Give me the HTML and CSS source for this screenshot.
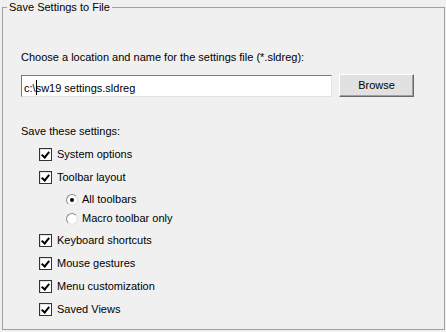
FILE: index.html
```html
<!DOCTYPE html>
<html lang="en">
<head>
    <meta charset="UTF-8">
    <title>Save Settings to File</title>
    <link rel="stylesheet" href="styles.css">
</head>
<body>
    <fieldset class="group">
        <legend>Save Settings to File</legend>
        <div class="group-body">
            <p class="prompt">Choose a location and name for the settings file (*.sldreg):</p>

            <div class="file-row">
                <div class="file-input">c:\<span class="caret"></span>sw19 settings.sldreg</div>
                <button class="btn">Browse</button>
            </div>

            <p class="section-label">Save these settings:</p>

            <div class="options">
                <div class="check-row"><span class="check on"></span>System options</div>
                <div class="check-row"><span class="check on"></span>Toolbar layout</div>

                <div class="radios">
                    <div class="radio-row"><span class="radio on"></span>All toolbars</div>
                    <div class="radio-row"><span class="radio"></span>Macro toolbar only</div>
                </div>

                <div class="check-row"><span class="check on"></span>Keyboard shortcuts</div>
                <div class="check-row"><span class="check on"></span>Mouse gestures</div>
                <div class="check-row"><span class="check on"></span>Menu customization</div>
                <div class="check-row"><span class="check on"></span>Saved Views</div>
            </div>
        </div>
    </fieldset>
</body>
</html>
```

FILE: styles.css
```css
* {
    box-sizing: border-box;
}
body {
    margin: 0;
    background-color: #f0f0f0;
    font-family: "Liberation Sans", Arial, sans-serif;
    font-size: 11px;
    line-height: 13px;
    color: #000;
}
.group {
    margin: 1px 1px 0 2px;
    padding: 0;
    height: 329px;
    border: 1px solid #a0a0a0;
}
.group legend {
    margin-left: 4px;
    padding: 0 2px;
}
.group-body {
    padding: 37px 0 0 18px;
}
.prompt {
    margin: 0;
}
.file-row {
    display: flex;
    margin-top: 11px;
}
.file-input {
    width: 311px;
    height: 22px;
    padding: 4px 2px;
    background-color: #fff;
    border: 1px solid #7a7a7a;
    border-right-color: #e3e3e3;
    border-bottom-color: #e3e3e3;
    white-space: nowrap;
}
.caret {
    display: inline-block;
    width: 1px;
    height: 15px;
    margin-right: -1px;
    vertical-align: -3px;
    background-color: #000;
}
.btn {
    width: 75px;
    height: 23px;
    margin: -1px 0 0 7px;
    padding: 0;
    font: inherit;
    color: #000;
    background-color: #e1e1e1;
    border: 1px solid;
    border-color: #fff #696969 #696969 #fff;
    box-shadow: inset -1px -1px 0 #a0a0a0;
}
.section-label {
    margin: 28px 0 0;
}
.options {
    margin-top: 5px;
    padding-left: 18px;
}
.check-row {
    display: flex;
    align-items: center;
    height: 23px;
}
.check {
    width: 13px;
    height: 13px;
    margin-right: 5px;
    background-color: #fff;
    border: 1px solid #333;
    box-shadow: inset 1px 1px 0 #e3e3e3;
    position: relative;
}
.check.on::after {
    content: "";
    position: absolute;
    left: 2px;
    top: 0px;
    width: 3px;
    height: 6px;
    border: solid #000;
    border-width: 0 2px 2px 0;
    transform: translate(1px, 1px) rotate(40deg);
}
.radios {
    padding: 1px 0 1px 27px;
}
.radio-row {
    display: flex;
    align-items: center;
    height: 19px;
}
.radio {
    width: 12px;
    height: 12px;
    margin-right: 4px;
    border-radius: 50%;
    border: 1px solid #8c8c8c;
    border-right-color: #e6e6e6;
    border-bottom-color: #e6e6e6;
    background: radial-gradient(circle at 50% 50%, #fff 55%, #dcdcdc 100%);
    position: relative;
}
.radio.on::after {
    content: "";
    position: absolute;
    left: 3px;
    top: 3px;
    width: 4px;
    height: 4px;
    border-radius: 50%;
    background-color: #000;
}
```
